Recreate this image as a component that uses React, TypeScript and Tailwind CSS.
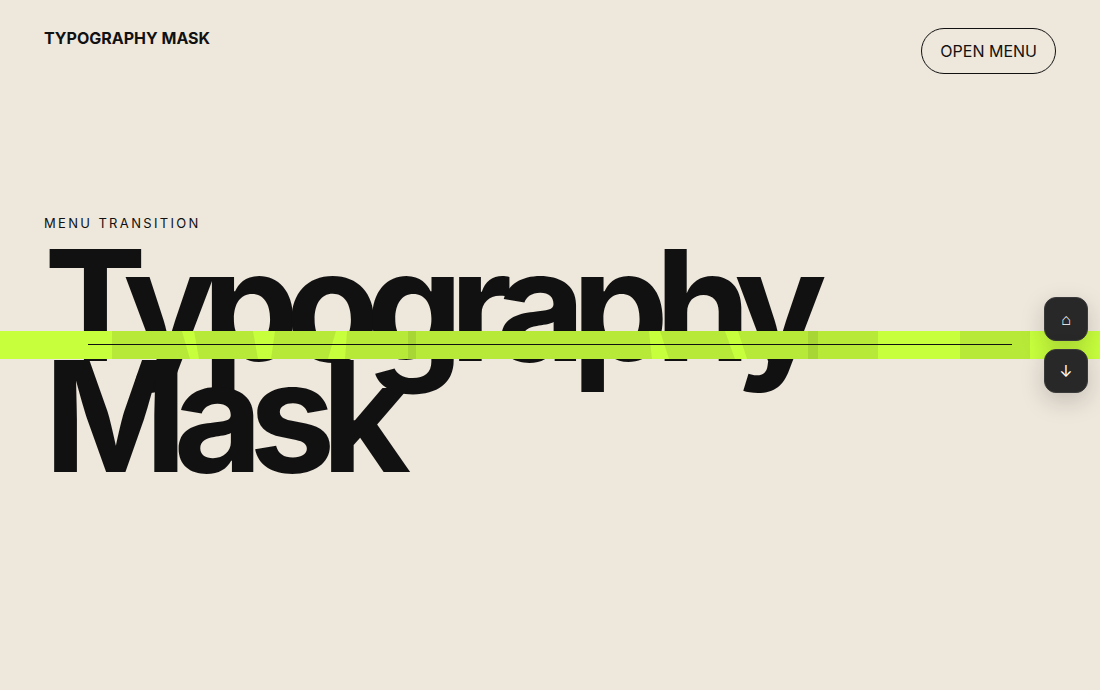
const DARK_SEGMENTS = [
  "112,0 182,0 190,28 112,28",
  "194,0 253,0 258,28 199,28",
  "275,0 336,0 328,28 271,28",
  "347,0 416,0 416,28 345,28",
  "408,0 649,0 652,28 408,28",
  "660,0 725,0 735,28 669,28",
  "738,0 818,0 818,28 747,28",
  "808,0 878,0 878,28 808,28",
  "960,0 1030,0 1030,28 960,28",
];

function GhostLetters() {
  return (
    <svg className="absolute inset-0" width="1100" height="28" viewBox="0 0 1100 28">
      {DARK_SEGMENTS.map((points) => (
        <polygon key={points} points={points} fill="#111111" fillOpacity="0.085" />
      ))}
    </svg>
  );
}

export default function App() {
  return (
    <div className="relative h-[690px] w-full overflow-hidden bg-[#eee7dc] text-[#111111] font-['Inter',sans-serif]">
      <header className="flex items-start justify-between px-11 pt-7">
        <span className="text-base font-bold leading-5">TYPOGRAPHY MASK</span>
        <button className="h-[46px] rounded-full border border-[#111111] px-[18px] text-base">OPEN MENU</button>
      </header>

      <main className="px-11 pt-[139px]">
        <p className="text-[13px] leading-5 tracking-[0.18em]">MENU TRANSITION</p>
        <h1 className="mt-[17px] text-[154px] font-bold leading-[0.72] tracking-[-0.09em]">
          Typography
          <br />
          Mask
        </h1>
      </main>

      {/* Lime band over the headline */}
      <div className="absolute inset-x-0 top-[331px] h-7 bg-[#c8ff3d]">
        <GhostLetters />
        <div className="absolute left-[88px] right-[88px] top-[13px] h-px bg-[#111111]" />
      </div>

      <div className="absolute right-3 top-[297px] flex flex-col gap-2">
        <button className="flex size-11 items-center justify-center rounded-xl border border-[#3a3a3a] bg-[#282828] text-base text-white shadow-[0_8px_24px_rgba(0,0,0,0.18)]">
          ⌂
        </button>
        <button className="flex size-11 items-center justify-center rounded-xl border border-[#3a3a3a] bg-[#282828] text-base text-white shadow-[0_8px_24px_rgba(0,0,0,0.18)]">
          ↓
        </button>
      </div>
    </div>
  );
}
